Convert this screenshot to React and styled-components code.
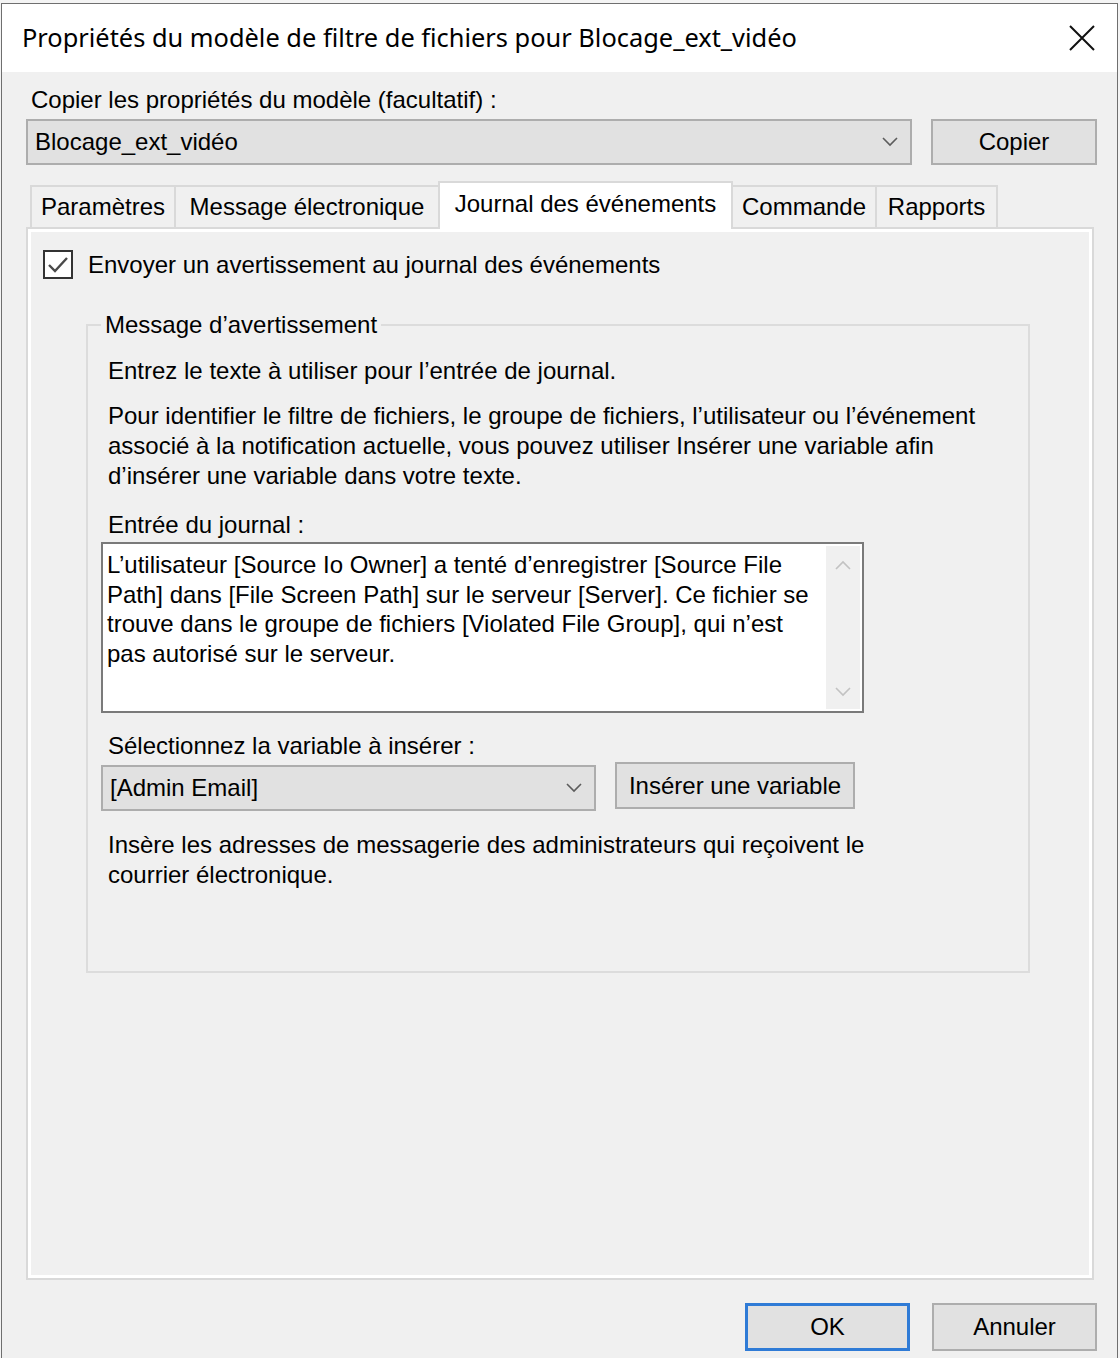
import React from "react";
import styled, { createGlobalStyle } from "styled-components";

const GlobalStyle = createGlobalStyle`
  html, body {
    margin: 0;
    padding: 0;
  }
  body {
    background: #f4f4f4;
    font-family: "Liberation Sans", Arial, sans-serif;
    color: #000;
  }
`;

const Screen = styled.div`
  width: 1120px;
  height: 1358px;
  box-sizing: border-box;
  padding: 3px 0 0 1px;
  overflow: hidden;
  background: #f4f4f4;
`;

const Dialog = styled.div`
  width: 1117px;
  height: 1355px;
  box-sizing: border-box;
  border: 1px solid #6f6f6f;
  border-bottom: none;
  display: flex;
  flex-direction: column;
  background: #f0f0f0;
`;

const TitleBar = styled.div`
  height: 68px;
  flex-shrink: 0;
  background: #fff;
  display: flex;
  align-items: center;
  justify-content: space-between;
  padding: 0 20px 0 20px;
`;

const Title = styled.div`
  font-family: "Noto Sans", "Open Sans", sans-serif;
  font-size: 25.4px;
  color: #000;
  padding-bottom: 2px;
`;

const CloseButton = styled.div`
  width: 30px;
  height: 30px;
  display: flex;
  align-items: center;
  justify-content: center;
`;

const Body = styled.div`
  flex: 1;
  display: flex;
  flex-direction: column;
  padding: 14px 20px 0 24px;
  min-height: 0;
`;

const Label = styled.div`
  font-size: 24px;
  line-height: 28px;
  padding-left: ${(p) => p.indent || 0}px;
  white-space: nowrap;
`;

const ComboRow = styled.div`
  display: flex;
  gap: 19px;
  margin-top: 5px;
`;

const Combo = styled.div`
  flex: ${(p) => (p.width ? "none" : 1)};
  width: ${(p) => (p.width ? `${p.width}px` : "auto")};
  height: 46px;
  box-sizing: border-box;
  border: 2px solid #adadad;
  background: #e1e1e1;
  display: flex;
  align-items: center;
  justify-content: space-between;
  padding: 0 12px 0 7px;
  font-size: 24px;
`;

const Button = styled.div`
  width: ${(p) => p.width}px;
  height: ${(p) => p.height || 46}px;
  box-sizing: border-box;
  border: ${(p) => (p.primary ? "3px solid #2f7bd6" : "2px solid #adadad")};
  background: #e1e1e1;
  display: flex;
  align-items: center;
  justify-content: center;
  font-size: 24px;
  margin-top: ${(p) => p.lift || 0}px;
  white-space: nowrap;
`;

const TabStrip = styled.div`
  display: flex;
  align-items: flex-end;
  height: 46px;
  margin-top: 16px;
  padding-left: 4px;
`;

const Tab = styled.div`
  position: relative;
  width: ${(p) => p.width}px;
  height: ${(p) => (p.active ? 48 : 42)}px;
  margin-bottom: ${(p) => (p.active ? -2 : 0)}px;
  z-index: ${(p) => (p.active ? 1 : 0)};
  box-sizing: border-box;
  border: 2px solid #d9d9d9;
  border-bottom: none;
  border-left-width: ${(p) => (p.first || p.active ? 2 : 0)}px;
  border-right-width: ${(p) => (p.beforeActive ? 0 : 2)}px;
  background: ${(p) => (p.active ? "#fff" : "#f0f0f0")};
  display: flex;
  align-items: center;
  justify-content: center;
  padding-bottom: ${(p) => (p.active ? 4 : 0)}px;
  font-size: 24px;
  white-space: nowrap;
`;

const Panel = styled.div`
  flex: 1;
  margin-right: 3px;
  border: 2px solid #d9d9d9;
  background: #fff;
  padding: 3px;
  display: flex;
  min-height: 0;
`;

const Page = styled.div`
  flex: 1;
  background: #f0f0f0;
  padding: 18px 12px 0 12px;
`;

const CheckRow = styled.div`
  display: flex;
  align-items: center;
  gap: 15px;
  height: 29px;
`;

const CheckBox = styled.div`
  width: 30px;
  height: 29px;
  box-sizing: border-box;
  border: 2px solid #333;
  background: #fff;
  display: flex;
  align-items: center;
  justify-content: center;
`;

const GroupBox = styled.fieldset`
  margin: 32px 47px 0 43px;
  padding: 17px 13px 81px 13px;
  border: 2px solid #dcdcdc;
  min-width: 0;
`;

const GroupTitle = styled.legend`
  padding: 0 4px;
  font-size: 24px;
  line-height: 28px;
`;

const Text = styled.p`
  margin: ${(p) => p.gap || 0}px 0 0 0;
  padding-left: 7px;
  font-size: 24px;
  line-height: 30px;
  white-space: nowrap;
`;

const LogBox = styled.div`
  margin-top: 2px;
  width: 763px;
  height: 171px;
  box-sizing: border-box;
  border: 2px solid #7a7a7a;
  background: #fff;
  display: flex;
`;

const LogText = styled.div`
  flex: 1;
  padding: 6px 0 0 4px;
  font-size: 24px;
  line-height: 29.5px;
  white-space: nowrap;
`;

const ScrollBar = styled.div`
  width: 34px;
  margin: 2px 2px 2px 0;
  background: #f0f0f0;
  display: flex;
  flex-direction: column;
  align-items: center;
  justify-content: space-between;
  padding: 14px 0 12px;
  box-sizing: border-box;
`;

const VarRow = styled.div`
  display: flex;
  align-items: flex-start;
  gap: 19px;
  margin-top: 4px;
`;

const Footer = styled.div`
  display: flex;
  justify-content: flex-end;
  gap: 22px;
  padding: 23px 0 7px;
`;

function Chevron({ up, color = "#5c5c5c", width = 16 }) {
  return (
    <svg width={width} height="10" viewBox="0 0 16 10">
      <polyline
        points={up ? "1,9 8,2 15,9" : "1,1 8,8 15,1"}
        fill="none"
        stroke={color}
        strokeWidth="1.6"
      />
    </svg>
  );
}

const tabs = [
  { label: "Paramètres", width: 146 },
  { label: "Message électronique", width: 262 },
  { label: "Journal des événements", width: 295, active: true },
  { label: "Commande", width: 144 },
  { label: "Rapports", width: 121 },
];

export default function App() {
  return (
    <>
      <GlobalStyle />
      <Screen>
        <Dialog>
          <TitleBar>
            <Title>Propriétés du modèle de filtre de fichiers pour Blocage_ext_vidéo</Title>
            <CloseButton>
              <svg width="26" height="26" viewBox="0 0 26 26">
                <path d="M1 1 L25 25 M25 1 L1 25" stroke="#111" strokeWidth="2" />
              </svg>
            </CloseButton>
          </TitleBar>

          <Body>
            <Label indent={5}>Copier les propriétés du modèle (facultatif) :</Label>
            <ComboRow>
              <Combo>
                <span>Blocage_ext_vidéo</span>
                <Chevron />
              </Combo>
              <Button width={166}>Copier</Button>
            </ComboRow>

            <TabStrip>
              {tabs.map((t, i) => (
                <Tab
                  key={t.label}
                  width={t.width}
                  active={t.active}
                  first={i === 0}
                  beforeActive={tabs[i + 1] && tabs[i + 1].active}
                >
                  {t.label}
                </Tab>
              ))}
            </TabStrip>

            <Panel>
              <Page>
                <CheckRow>
                  <CheckBox>
                    <svg width="22" height="18" viewBox="0 0 22 18">
                      <polyline
                        points="2,9 8,15 20,2"
                        fill="none"
                        stroke="#4a4a4a"
                        strokeWidth="2.4"
                      />
                    </svg>
                  </CheckBox>
                  <Label>Envoyer un avertissement au journal des événements</Label>
                </CheckRow>

                <GroupBox>
                  <GroupTitle>Message d’avertissement</GroupTitle>
                  <Text>Entrez le texte à utiliser pour l’entrée de journal.</Text>
                  <Text gap={15}>
                    Pour identifier le filtre de fichiers, le groupe de fichiers, l’utilisateur ou l’événement
                    <br />
                    associé à la notification actuelle, vous pouvez utiliser Insérer une variable afin
                    <br />
                    d’insérer une variable dans votre texte.
                  </Text>
                  <Text gap={19}>Entrée du journal :</Text>
                  <LogBox>
                    <LogText>
                      L’utilisateur [Source Io Owner] a tenté d’enregistrer [Source File
                      <br />
                      Path] dans [File Screen Path] sur le serveur [Server]. Ce fichier se
                      <br />
                      trouve dans le groupe de fichiers [Violated File Group], qui n’est
                      <br />
                      pas autorisé sur le serveur.
                    </LogText>
                    <ScrollBar>
                      <Chevron up color="#c2c2c2" />
                      <Chevron color="#c2c2c2" />
                    </ScrollBar>
                  </LogBox>
                  <Text gap={18}>Sélectionnez la variable à insérer :</Text>
                  <VarRow>
                    <Combo width={495}>
                      <span>[Admin Email]</span>
                      <Chevron />
                    </Combo>
                    <Button width={240} height={47} lift={-3}>
                      Insérer une variable
                    </Button>
                  </VarRow>
                  <Text gap={19}>
                    Insère les adresses de messagerie des administrateurs qui reçoivent le
                    <br />
                    courrier électronique.
                  </Text>
                </GroupBox>
              </Page>
            </Panel>

            <Footer>
              <Button width={165} height={48} primary>
                OK
              </Button>
              <Button width={165} height={48}>
                Annuler
              </Button>
            </Footer>
          </Body>
        </Dialog>
      </Screen>
    </>
  );
}
